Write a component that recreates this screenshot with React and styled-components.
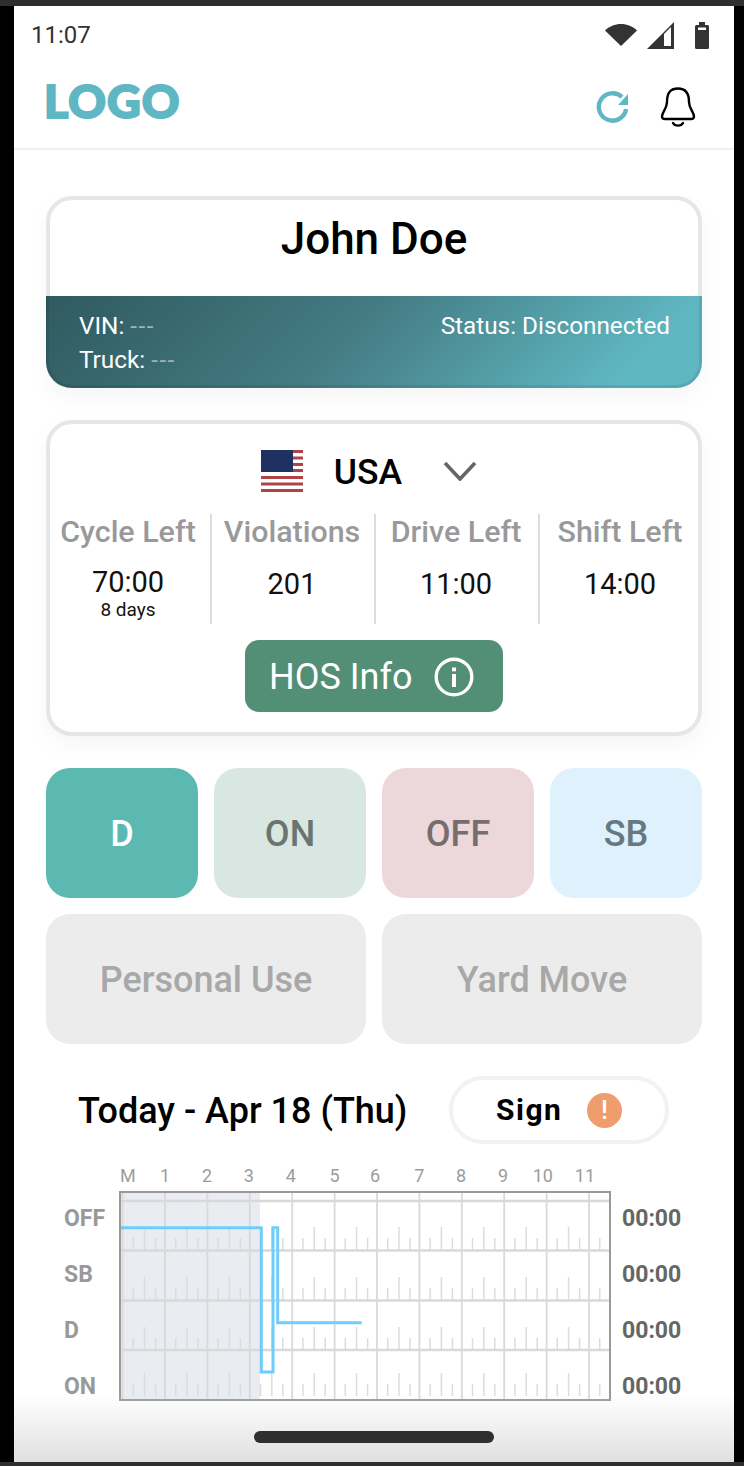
import React from "react";
import styled, { createGlobalStyle } from "styled-components";

const GlobalStyle = createGlobalStyle`
  html, body {
    margin: 0;
    background: #000;
  }
  * {
    box-sizing: border-box;
  }
`;

const Page = styled.div`
  width: 744px;
  height: 1466px;
  background: #000;
  border-top: 6px solid #2e2e2e;
  border-bottom: 4px solid #2e2e2e;
  padding: 0 10px 0 14px;
  font-family: Roboto, "Liberation Sans", sans-serif;
`;

const Screen = styled.div`
  position: relative;
  width: 720px;
  height: 1456px;
  background: #fff;
  overflow: hidden;
`;

const StatusBar = styled.div`
  height: 58px;
  padding: 0 25px 0 17px;
  display: flex;
  align-items: center;
  justify-content: space-between;
  color: #333;
  font-size: 24px;
`;

const StatusIcons = styled.div`
  display: flex;
  align-items: center;
  gap: 10px;

  svg:last-child {
    margin-left: 11px;
  }
`;

const Header = styled.header`
  height: 86px;
  padding: 0 38px 6px 30px;
  display: flex;
  align-items: center;
  justify-content: space-between;
  border-bottom: 2px solid #f1f1f1;
`;

const Logo = styled.div`
  margin-bottom: 6px;
  font-family: Lato, "Liberation Sans", sans-serif;
  font-weight: 900;
  font-size: 46.5px;
  line-height: 1;
  letter-spacing: 1px;
  color: #5fb7c4;
  -webkit-text-stroke: 2px #5fb7c4;
`;

const HeaderIcons = styled.div`
  padding-top: 8px;
  display: flex;
  align-items: center;
  gap: 30px;
`;

const Main = styled.main`
  padding: 46px 32px 0;
  display: flex;
  flex-direction: column;
  gap: 32px;
`;

const Card = styled.section`
  border: 4px solid #e6e6e6;
  border-radius: 26px;
  background: #fff;
  box-shadow: 0 10px 24px rgba(0, 0, 0, 0.04);
  padding-bottom: ${(p) => p.$bottom || 0}px;
`;

const DriverName = styled.h1`
  margin: 0;
  height: 96px;
  padding-top: 14px;
  text-align: center;
  font-size: 44px;
  line-height: 50px;
  font-weight: 500;
  color: #000;
`;

const TruckStrip = styled.div`
  margin: 0 -4px -4px;
  height: 92px;
  padding: 13px 29px 0 30px;
  display: flex;
  justify-content: space-between;
  border: 3px solid rgba(0, 0, 0, 0.08);
  border-top: 0;
  border-radius: 0 0 26px 26px;
  background: linear-gradient(135deg, #2f5a60 0%, #447a82 45%, #5fb7c2 88%) border-box;
  color: #fff;
  font-size: 24.3px;
  line-height: 34px;
`;

const Muted = styled.span`
  color: #9bb2b6;
  letter-spacing: 1.5px;
`;

const RegionRow = styled.div`
  margin-top: 26px;
  height: 42px;
  padding-right: 10px;
  display: flex;
  align-items: center;
  justify-content: center;
  font-size: 35.5px;
  font-weight: 500;
  color: #000;
  gap: 31px;
`;

const RegionName = styled.span`
  margin-right: 10px;
  padding-top: 2px;
`;

const StatsRow = styled.div`
  margin: 22px -4px 0;
  display: grid;
  grid-template-columns: repeat(4, 1fr);
`;

const Stat = styled.div`
  height: 110px;
  text-align: center;
  border-left: ${(p) => (p.$first ? "0" : "2px solid #dcdcdc")};
  padding-right: ${(p) => (p.$first ? 0 : 2)}px;
`;

const StatLabel = styled.div`
  padding-top: 1px;
  font-size: 30.4px;
  line-height: 34px;
  font-weight: 500;
  color: #999;
  white-space: nowrap;
`;

const StatValue = styled.div`
  margin-top: ${(p) => (p.$withNote ? 16 : 18)}px;
  font-size: 29px;
  line-height: 34px;
  color: #111;
`;

const StatNote = styled.div`
  font-size: 19px;
  line-height: 22px;
  color: #111;
`;

const InfoButton = styled.button`
  display: flex;
  align-items: center;
  gap: 22px;
  width: 258px;
  height: 72px;
  margin: 16px auto 0;
  padding: 1px 0 0 24px;
  border: 0;
  border-radius: 14px;
  background: #528f76;
  color: #fff;
  font-family: inherit;
  font-size: 36px;
`;

const DutyGrid = styled.div`
  display: grid;
  grid-template-columns: repeat(4, 1fr);
  gap: 16px;
`;

const dutyColors = {
  d: ["#5cb9b1", "#fff"],
  on: ["#d9e7e2", "#6a7570"],
  off: ["#ecd8db", "#756d6e"],
  sb: ["#def1fc", "#66797f"],
  idle: ["#ececec", "#a8a8a8"],
};

const DutyButton = styled.button`
  grid-column: span ${(p) => (p.$wide ? 2 : 1)};
  height: 130px;
  padding: 2px 0 0;
  border: 0;
  border-radius: 24px;
  background: ${(p) => dutyColors[p.$kind][0]};
  color: ${(p) => dutyColors[p.$kind][1]};
  font-family: inherit;
  font-size: 36px;
  font-weight: 500;
`;

const TodayRow = styled.div`
  padding: 0 33px 0 32px;
  display: flex;
  align-items: center;
  justify-content: space-between;
`;

const TodayTitle = styled.div`
  padding-top: 2px;
  font-size: 36px;
  font-weight: 500;
  color: #000;
`;

const SignButton = styled.button`
  width: 220px;
  height: 68px;
  padding: 0 43px;
  display: flex;
  align-items: center;
  justify-content: space-between;
  border: 4px solid #f2f2f2;
  border-radius: 34px;
  background: #fff;
  color: #000;
  font-family: inherit;
  font-size: 30px;
  font-weight: 700;
  letter-spacing: 1.5px;
`;

const SignLabel = styled.span`
  padding-bottom: 2px;
`;

const Alert = styled.span`
  width: 35px;
  height: 35px;
  border-radius: 50%;
  background: #ef9d6d;
  color: #fff;
  display: flex;
  align-items: center;
  justify-content: center;
  font-size: 26px;
  font-weight: 500;
  letter-spacing: 0;
`;

const ChartArea = styled.div`
  margin-top: -10px;
  padding-left: 18px;
  display: grid;
  grid-template-columns: 55px 492px auto;
  grid-template-rows: 25px 210px;
`;

const Hours = styled.div`
  grid-column: 2 / 4;
  display: flex;
  align-items: flex-start;
  font-size: 18px;
  line-height: 20px;
  color: #9c9c9c;
`;

const Hour = styled.span`
  flex: none;
  width: ${(p) => p.$width}px;
  padding-right: ${(p) => p.$nudge * 2}px;
  text-align: ${(p) => (p.$first ? "left" : "center")};
  padding-left: ${(p) => (p.$first ? 1 : 0)}px;
`;

const RowLabels = styled.div`
  margin-top: -1px;
  display: grid;
  grid-auto-rows: 56px;
  align-items: center;
  font-size: 23px;
  font-weight: 700;
  color: ${(p) => p.$color};
  padding-left: ${(p) => p.$inset}px;
`;

const ChartSvg = styled.svg`
  display: block;
`;

const BottomFade = styled.div`
  position: absolute;
  left: 0;
  right: 0;
  bottom: 0;
  height: 68px;
  background: linear-gradient(rgba(224, 224, 224, 0), #e0e0e0);
  display: flex;
  justify-content: center;
  padding-top: 37px;
`;

const HomeBar = styled.div`
  width: 240px;
  height: 12px;
  border-radius: 6px;
  background: #2f2f2f;
`;

const WifiIcon = () => (
  <svg width="32" height="22" viewBox="0 0 32 22">
    <path d="M0 6.500C4 2.500 10 0 16 0s12 2.500 16 6.500L16 22z" fill="#333" />
  </svg>
);

const SignalIcon = () => (
  <svg width="27" height="27" viewBox="0 0 27 27">
    <path d="M27 0v27H0z" fill="#333" />
    <path d="M17 12l7-7v19h-7z" fill="#fff" />
  </svg>
);

const BatteryIcon = () => (
  <svg width="14" height="27" viewBox="0 0 14 27">
    <path d="M4 0h6v3h2.500A1.500 1.500 0 0 1 14 4.500V25.500A1.500 1.500 0 0 1 12.500 27h-11A1.500 1.500 0 0 1 0 25.500V4.500A1.500 1.500 0 0 1 1.500 3H4z" fill="#333" />
    <rect x="3" y="5.500" width="8" height="2.500" fill="#fff" />
  </svg>
);

const RefreshIcon = () => (
  <svg width="34" height="34" viewBox="0 0 34 34">
    <path d="M30.100 19A13.700 13.700 0 1 1 26 7" fill="none" stroke="#5fb7c4" strokeWidth="4.400" />
    <path d="M32 4v11H22z" fill="#5fb7c4" />
  </svg>
);

const BellIcon = () => (
  <svg width="36" height="40" viewBox="0 0 36 40" fill="none" stroke="#000" strokeWidth="2.400" strokeLinecap="round" strokeLinejoin="round">
    <path d="M7 15C7 5 11 1.500 18 1.500S29 5 29 15c0 7 5 10 5 14.500 0 1.500-1 2.500-3 2.500H5c-2 0-3-1-3-2.500C2 25 7 22 7 15z" />
    <path d="M13 36c2 3.500 8 3.500 10 0" />
  </svg>
);

const FlagIcon = () => (
  <svg width="42" height="42" viewBox="0 0 42 42">
    <rect width="42" height="42" fill="#fff" />
    {[0, 6.500, 13, 19, 26, 32.500, 39].map((y) => (
      <rect key={y} y={y} width="42" height="3" fill="#b04347" />
    ))}
    <rect width="32" height="22" fill="#1f3160" />
  </svg>
);

const ChevronIcon = () => (
  <svg width="34" height="20" viewBox="0 0 34 20">
    <path d="M2 2l15 16L32 2" fill="none" stroke="#666" strokeWidth="3.600" />
  </svg>
);

const InfoIcon = () => (
  <svg width="40" height="40" viewBox="0 0 40 40">
    <circle cx="20" cy="20" r="17.800" fill="none" stroke="#fff" strokeWidth="3.400" />
    <rect x="18" y="17" width="4" height="13" fill="#fff" />
    <rect x="18" y="10.500" width="4" height="3.800" fill="#fff" />
  </svg>
);

const hourStep = 42.4;
const hourX = Array.from({ length: 12 }, (_, i) => 3.6 + i * hourStep);
const rowBottoms = [59, 109, 159, 205];
const rowLines = [10, 59.5, 109.5, 159];
const tickOffsets = [
  { dx: 10.7, h: 12 },
  { dx: 22, h: 23 },
  { dx: 33, h: 12 },
];

const DutyChart = () => (
  <ChartSvg width="492" height="210" viewBox="0 0 492 210">
    <rect x="2" y="1" width="139" height="207" fill="#e9ecf1" />
    {rowBottoms.map((bottom) =>
      hourX.map((x) =>
        tickOffsets
          .filter((t) => x + t.dx < 490)
          .map((t) => (
            <line
              key={`${bottom}-${x}-${t.dx}`}
              x1={x + t.dx}
              x2={x + t.dx}
              y1={bottom}
              y2={bottom - t.h}
              stroke="#dcdcdc"
              strokeWidth="1.500"
            />
          ))
      )
    )}
    {hourX.map((x) => (
      <line key={x} x1={x} x2={x} y1="0" y2="210" stroke="#d9d9d9" strokeWidth="1.800" />
    ))}
    {rowLines.map((y) => (
      <line key={y} x1="0" x2="492" y1={y} y2={y} stroke="#d9d9d9" strokeWidth="2.400" />
    ))}
    <polyline
      points="2,36.700 142.300,36.700 142.300,181 154,181 154,36.700 158.700,36.700 158.700,131.700 242.700,131.700"
      fill="none"
      stroke="#6fcdfb"
      strokeWidth="3"
    />
    <rect x="1" y="1" width="490" height="208" fill="none" stroke="#999" strokeWidth="2" />
  </ChartSvg>
);

const hours = [
  { label: "M", width: 24.8, nudge: 0, first: true },
  { label: "1", nudge: 0 },
  { label: "2", nudge: 0.3 },
  { label: "3", nudge: 1 },
  { label: "4", nudge: 1.3 },
  { label: "5", nudge: 0 },
  { label: "6", nudge: 2 },
  { label: "7", nudge: 0 },
  { label: "8", nudge: 0.7 },
  { label: "9", nudge: 1 },
  { label: "10", nudge: 3.7 },
  { label: "11", nudge: 4 },
];

export default function App() {
  return (
    <Page>
      <GlobalStyle />
      <Screen>
        <StatusBar>
          <span>11:07</span>
          <StatusIcons>
            <WifiIcon />
            <SignalIcon />
            <BatteryIcon />
          </StatusIcons>
        </StatusBar>

        <Header>
          <Logo>LOGO</Logo>
          <HeaderIcons>
            <RefreshIcon />
            <BellIcon />
          </HeaderIcons>
        </Header>

        <Main>
          <Card>
            <DriverName>John Doe</DriverName>
            <TruckStrip>
              <div>
                <div>
                  VIN: <Muted>---</Muted>
                </div>
                <div>
                  Truck: <Muted>---</Muted>
                </div>
              </div>
              <div>Status: Disconnected</div>
            </TruckStrip>
          </Card>

          <Card $bottom={20}>
            <RegionRow>
              <FlagIcon />
              <RegionName>USA</RegionName>
              <ChevronIcon />
            </RegionRow>
            <StatsRow>
              <Stat $first>
                <StatLabel>Cycle Left</StatLabel>
                <StatValue $withNote>70:00</StatValue>
                <StatNote>8 days</StatNote>
              </Stat>
              <Stat>
                <StatLabel>Violations</StatLabel>
                <StatValue>201</StatValue>
              </Stat>
              <Stat>
                <StatLabel>Drive Left</StatLabel>
                <StatValue>11:00</StatValue>
              </Stat>
              <Stat>
                <StatLabel>Shift Left</StatLabel>
                <StatValue>14:00</StatValue>
              </Stat>
            </StatsRow>
            <InfoButton>
              HOS Info
              <InfoIcon />
            </InfoButton>
          </Card>

          <DutyGrid>
            <DutyButton $kind="d">D</DutyButton>
            <DutyButton $kind="on">ON</DutyButton>
            <DutyButton $kind="off">OFF</DutyButton>
            <DutyButton $kind="sb">SB</DutyButton>
            <DutyButton $kind="idle" $wide>
              Personal Use
            </DutyButton>
            <DutyButton $kind="idle" $wide>
              Yard Move
            </DutyButton>
          </DutyGrid>

          <TodayRow>
            <TodayTitle>Today - Apr 18 (Thu)</TodayTitle>
            <SignButton>
              <SignLabel>Sign</SignLabel>
              <Alert>!</Alert>
            </SignButton>
          </TodayRow>

          <ChartArea>
            <div />
            <Hours>
              {hours.map((h) => (
                <Hour key={h.label} $width={h.width || hourStep} $nudge={h.nudge} $first={h.first}>
                  {h.label}
                </Hour>
              ))}
            </Hours>
            <RowLabels $color="#999" $inset={0}>
              <span>OFF</span>
              <span>SB</span>
              <span>D</span>
              <span>ON</span>
            </RowLabels>
            <DutyChart />
            <RowLabels $color="#666" $inset={11}>
              <span>00:00</span>
              <span>00:00</span>
              <span>00:00</span>
              <span>00:00</span>
            </RowLabels>
          </ChartArea>
        </Main>

        <BottomFade>
          <HomeBar />
        </BottomFade>
      </Screen>
    </Page>
  );
}
